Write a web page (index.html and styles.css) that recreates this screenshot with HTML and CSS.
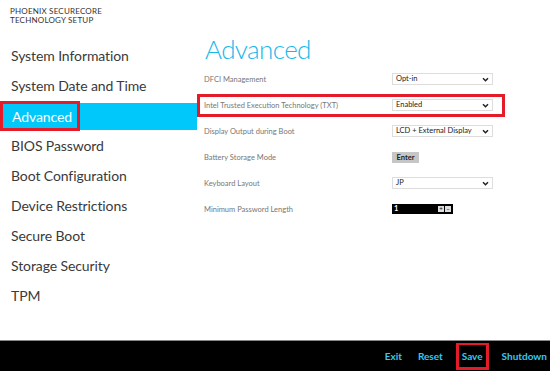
FILE: index.html
```html
<!DOCTYPE html>
<html lang="en">
<head>
    <meta charset="UTF-8">
    <meta name="viewport" content="width=device-width, initial-scale=1.0">
    <title>Phoenix SecureCore Technology Setup</title>
    <link rel="stylesheet" href="styles.css">
</head>
<body>
    <div id="screen">
        <div id="main">
            <div id="sidebar">
                <div class="brand">
                    <div>PHOENIX SECURECORE</div>
                    <div>TECHNOLOGY SETUP</div>
                </div>
                <ul class="nav">
                    <li>System Information</li>
                    <li>System Date and Time</li>
                    <li class="active"><span class="marked">Advanced</span></li>
                    <li>BIOS Password</li>
                    <li>Boot Configuration</li>
                    <li>Device Restrictions</li>
                    <li>Secure Boot</li>
                    <li>Storage Security</li>
                    <li>TPM</li>
                </ul>
            </div>
            <div id="content">
                <h1>Advanced</h1>
                <div class="row">
                    <span class="label">DFCI Management</span>
                    <div class="select">Opt-in<svg viewBox="0 0 8 6"><path d="M1 1.5 L4 4.5 L7 1.5" /></svg></div>
                </div>
                <div class="row marked-row">
                    <span class="label">Intel Trusted Execution Technology (TXT)</span>
                    <div class="select">Enabled<svg viewBox="0 0 8 6"><path d="M1 1.5 L4 4.5 L7 1.5" /></svg></div>
                </div>
                <div class="row">
                    <span class="label">Display Output during Boot</span>
                    <div class="select">LCD + External Display<svg viewBox="0 0 8 6"><path d="M1 1.5 L4 4.5 L7 1.5" /></svg></div>
                </div>
                <div class="row">
                    <span class="label">Battery Storage Mode</span>
                    <div class="button">Enter</div>
                </div>
                <div class="row">
                    <span class="label">Keyboard Layout</span>
                    <div class="select">JP<svg viewBox="0 0 8 6"><path d="M1 1.5 L4 4.5 L7 1.5" /></svg></div>
                </div>
                <div class="row">
                    <span class="label">Minimum Password Length</span>
                    <div class="spinner">
                        <span class="value">1</span>
                        <span class="step">+</span>
                        <span class="step">&minus;</span>
                    </div>
                </div>
            </div>
        </div>
        <div id="footer">
            <span class="action">Exit</span>
            <span class="action">Reset</span>
            <span class="action marked-action">Save</span>
            <span class="action last">Shutdown</span>
        </div>
    </div>
</body>
</html>
```

FILE: styles.css
```css
body {
    margin: 0;
    padding: 0;
    background: #fff;
    font-family: Lato, "Open Sans", sans-serif;
    overflow: hidden;
}
#screen {
    width: 550px;
    height: 371px;
    display: flex;
    flex-direction: column;
}
#main {
    flex: 1;
    display: grid;
    grid-template-columns: 197px 1fr;
}
.brand {
    padding: 7px 0 0 10px;
    font-size: 8px;
    line-height: 8.5px;
    letter-spacing: 0.2px;
    color: #333;
    height: 25px;
}
.nav {
    list-style: none;
    margin: 9px 0 0 0;
    padding: 0;
}
.nav li {
    height: 30px;
    line-height: 30px;
    padding-left: 11px;
    font-size: 14px;
    letter-spacing: -0.1px;
    color: #3a3a3a;
}
.nav li.active {
    padding-left: 0;
    background: #00c8fa;
    background-clip: content-box;
    padding-top: 2px;
    padding-bottom: 1px;
    height: 27px;
    line-height: 27px;
    position: relative;
}
.marked {
    position: absolute;
    left: 0;
    top: 0;
    width: 80px;
    height: 30px;
    box-sizing: border-box;
    border: 3px solid #e41c2a;
    padding-left: 9px;
    line-height: 25px;
    color: #fff;
}
#content h1 {
    margin: 0;
    padding: 33px 0 0 8px;
    height: 33px;
    font-size: 26px;
    font-weight: 300;
    letter-spacing: -0.6px;
    line-height: 33px;
    color: #19b8ea;
}
.row {
    width: 308px;
    height: 26px;
    display: flex;
    align-items: center;
    padding-left: 7px;
    box-sizing: border-box;
    position: relative;
}
.label {
    width: 188px;
    font-size: 7.5px;
    color: #777;
}
.marked-row::after {
    content: "";
    position: absolute;
    left: 0;
    right: 0;
    top: 2px;
    bottom: 1px;
    border: 3px solid #e41c2a;
}
.select {
    width: 101px;
    height: 12px;
    box-sizing: border-box;
    border: 1px solid #ddd;
    font-size: 7.5px;
    line-height: 10px;
    padding-left: 3px;
    color: #222;
    display: flex;
    justify-content: space-between;
    align-items: center;
}
.select svg {
    width: 7px;
    height: 5px;
    margin-right: 3px;
    fill: none;
    stroke: #222;
    stroke-width: 1.8;
}
.button {
    width: 27px;
    height: 11px;
    background: #c6c6c6;
    font-size: 7.5px;
    font-weight: 700;
    line-height: 11px;
    text-align: center;
    color: #222;
}
.spinner {
    width: 61px;
    height: 10px;
    background: #000;
    display: flex;
    align-items: center;
    padding: 0 2px;
    box-sizing: border-box;
    gap: 1px;
}
.spinner .value {
    flex: 1;
    color: #fff;
    font-size: 7.5px;
    font-weight: 700;
    line-height: 10px;
}
.spinner .step {
    width: 6px;
    height: 6px;
    background: #ddd;
    color: #000;
    font-size: 6px;
    line-height: 6px;
    text-align: center;
}
#footer {
    height: 30px;
    border-top: 1px solid #888;
    background: #000;
    display: flex;
    justify-content: flex-end;
    align-items: center;
}
.action {
    color: #35c8f0;
    font-size: 10px;
    font-weight: 700;
    padding: 0 8px;
    line-height: 27px;
}
.action.last {
    padding-right: 3px;
}
.marked-action {
    border: 3px solid #e41c2a;
    border-top-width: 2px;
    padding: 0 3px;
    margin: 0 5px;
    line-height: 22px;
}
```
